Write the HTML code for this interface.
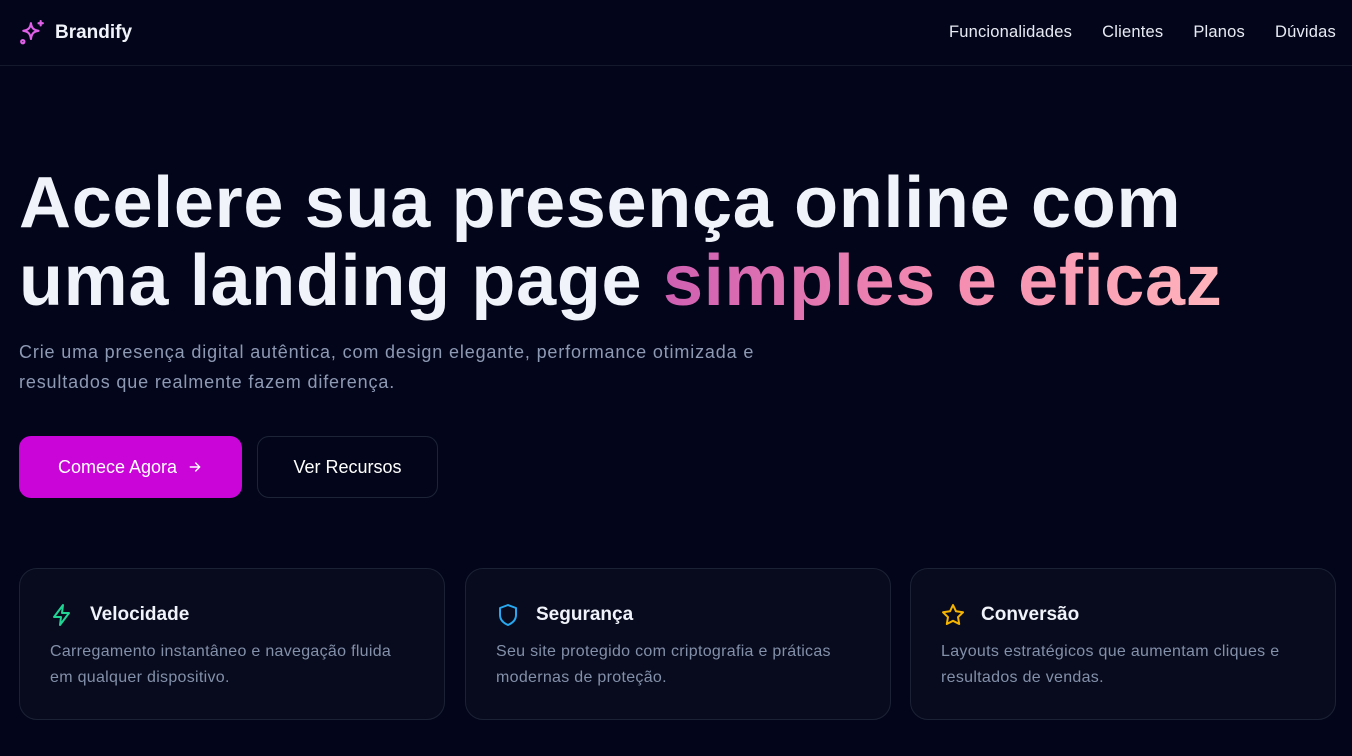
<!DOCTYPE html>
<html><head><meta charset="utf-8"><style>
*{margin:0;padding:0;box-sizing:border-box}
body{width:1352px;height:756px;overflow:hidden;background:#03061a;font-family:"Liberation Sans","DejaVu Sans",sans-serif;color:#f1f3fa}
.nav{height:66px;border-bottom:1px solid #141a2c;display:flex;align-items:center;padding:0 16px 0 19px}
.brand{display:flex;align-items:center;gap:10px;font-weight:bold;font-size:19px}
.links{margin-left:auto;display:flex;gap:30px;font-size:16.5px;color:#e8ebf3;letter-spacing:0.2px}
h1{position:absolute;left:19px;top:164px;font-size:72px;line-height:78px;font-weight:bold;letter-spacing:0.7px;white-space:nowrap}
.g{background:linear-gradient(90deg,#cf5fb2,#f48bb0 50%,#ffb4bb);-webkit-background-clip:text;background-clip:text;color:transparent}
.sub{position:absolute;left:19px;top:337px;font-size:18px;line-height:30px;color:#8e99b4;width:770px;letter-spacing:0.85px}
.btn{position:absolute;top:436px;height:62px;border-radius:12px;display:flex;align-items:center;justify-content:center;font-size:18px}
.b1{left:19px;width:223px;background:#c905d8;color:#fff;gap:10px}
.b2{left:257px;width:181px;border:1px solid #1e2438;color:#fff}
.card{position:absolute;top:568px;width:426px;height:152px;border:1px solid #1c2235;border-radius:18px;background:#080b1d;padding:32px 30px}
.ct{display:flex;align-items:center;gap:16px;font-size:19px;font-weight:bold;margin-top:2px}
.cd{margin-top:12px;font-size:16px;line-height:26px;color:#8390aa;width:370px;letter-spacing:0.3px}
</style></head><body>
<div class="nav"><div class="brand"><svg width="26" height="26" viewBox="0 0 24 24" fill="none" stroke="#e060e8" stroke-width="2" stroke-linecap="round" stroke-linejoin="round"><path d="M11 3c.7 4.5 2.3 6.2 7 7-4.7.8-6.3 2.5-7 7.5-.7-5-2.3-6.7-7-7.5 4.7-.8 6.3-2.5 7-7z"/><path d="M20 1v4M18 3h4"/><circle cx="3.5" cy="20" r="1.5"/></svg>Brandify</div>
<div class="links"><span>Funcionalidades</span><span>Clientes</span><span>Planos</span><span>Dúvidas</span></div></div>
<h1>Acelere sua presença online com<br>uma landing page <span class="g">simples e eficaz</span></h1>
<div class="sub">Crie uma presença digital autêntica, com design elegante, performance otimizada e<br>resultados que realmente fazem diferença.</div>
<div class="btn b1">Comece Agora <svg width="16" height="16" viewBox="0 0 24 24" fill="none" stroke="#fff" stroke-width="2.2" stroke-linecap="round" stroke-linejoin="round"><path d="M5 12h14M13 6l6 6-6 6"/></svg></div>
<div class="btn b2">Ver Recursos</div>
<div class="card" style="left:19px"><div class="ct"><svg width="24" height="24" viewBox="0 0 24 24" fill="none" stroke="#20d494" stroke-width="2" stroke-linejoin="round"><path d="M13 2L4 14h7l-1 8 9-12h-7z"/></svg>Velocidade</div><div class="cd">Carregamento instantâneo e navegação fluida<br>em qualquer dispositivo.</div></div>
<div class="card" style="left:465px"><div class="ct"><svg width="24" height="24" viewBox="0 0 24 24" fill="none" stroke="#28a8f0" stroke-width="2" stroke-linejoin="round"><path d="M12 2l8 3v7c0 5-3.5 8-8 10-4.5-2-8-5-8-10V5z"/></svg>Segurança</div><div class="cd">Seu site protegido com criptografia e práticas<br>modernas de proteção.</div></div>
<div class="card" style="left:910px"><div class="ct"><svg width="24" height="24" viewBox="0 0 24 24" fill="none" stroke="#f4b400" stroke-width="2" stroke-linejoin="round"><path d="M12 2l3 6.3 7 1-5 4.8 1.2 6.9L12 17.8 5.8 21l1.2-6.9-5-4.8 7-1z"/></svg>Conversão</div><div class="cd">Layouts estratégicos que aumentam cliques e<br>resultados de vendas.</div></div>
</body></html>
